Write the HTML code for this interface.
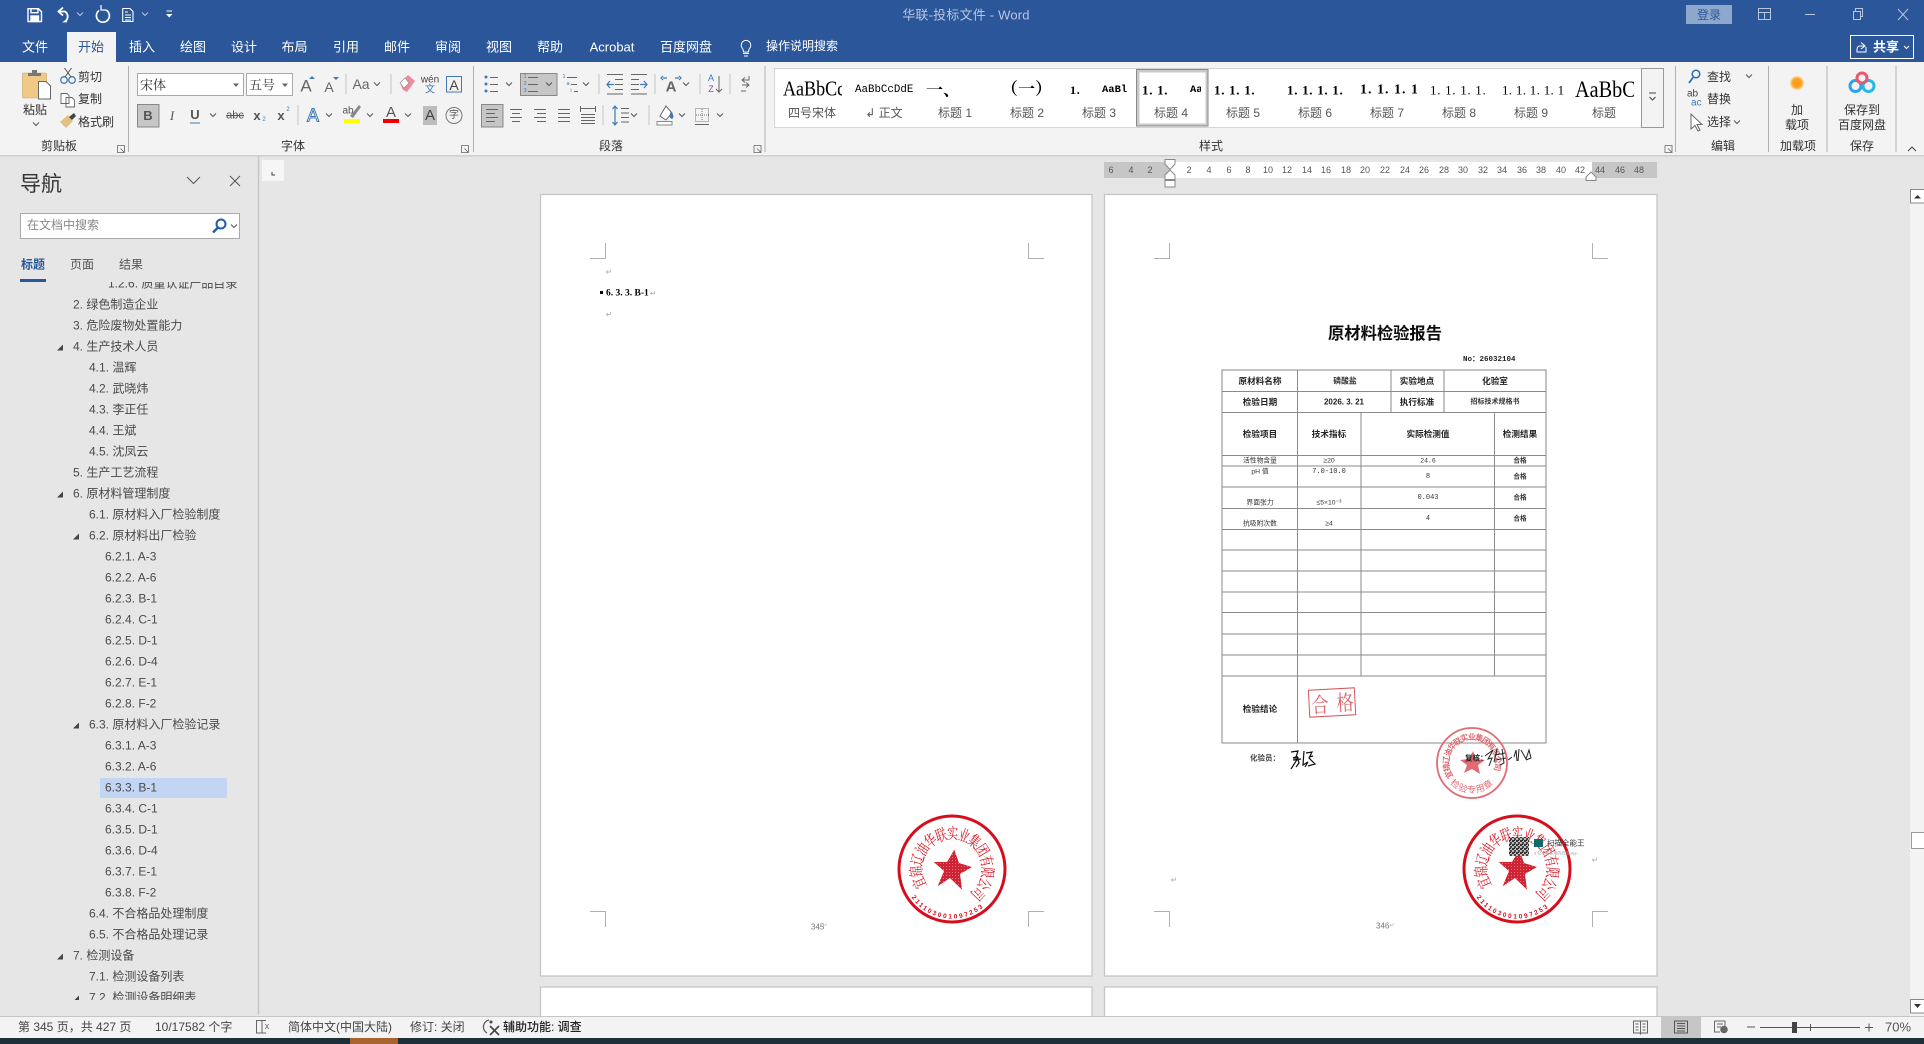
<!DOCTYPE html>
<html lang="zh-CN">
<head>
<meta charset="utf-8">
<title>华联-投标文件 - Word</title>
<style>
html,body{margin:0;padding:0;background:#e6e6e6;width:1924px;height:1044px;overflow:hidden}
svg.root{display:block;position:absolute;left:0;top:0}
text{font-family:"Liberation Sans","Noto Sans CJK SC",sans-serif;font-size:12px;fill:#444;dominant-baseline:central}
.m{text-anchor:middle}
.tab{font-size:13px;fill:#fff;text-anchor:middle}
.lab{font-size:12px;fill:#555;text-anchor:middle}
.sty{font-family:"Liberation Serif","Noto Serif CJK SC",serif;font-weight:bold;fill:#000;font-size:13px;letter-spacing:.7px}
.ser{font-family:"Liberation Serif","Noto Serif CJK SC",serif;fill:#000}
.tree text{font-size:12px;fill:#4a4a4a}
.rn{font-size:9px;fill:#555;text-anchor:middle}
.rep text{fill:#222;text-anchor:middle;font-weight:bold;font-size:8.6px}
.rep .s{font-size:6.8px;font-weight:normal;fill:#333}
.rep .sb{font-size:6.6px;font-weight:bold;fill:#333}
.rep .n{font-family:"Liberation Mono",monospace;font-size:7px;font-weight:normal;fill:#333}
.st{font-size:12px;fill:#444}
.i{fill:none;stroke:#666;stroke-width:1}
.b{fill:none;stroke:#3f78b5;stroke-width:1.2}
.f{fill:#666}
.sep{stroke:#c6c6c6;stroke-width:1}
.gs{stroke:#b0b0b0;stroke-width:1}
.pm{stroke:#b0b0b0;stroke-width:1;fill:none}
.pil{font-size:8px;fill:#aaa;text-anchor:middle}
.sc text{font-size:12.5px;fill:#d8101c;text-anchor:middle;font-family:"Noto Serif CJK SC",serif}
</style>
</head>
<body>
<svg class="root" width="1924" height="1044" viewBox="0 0 1924 1044" xmlns="http://www.w3.org/2000/svg">
<defs>
<path id="c" d="M-3 -1.5L0 1.5L3 -1.5" fill="none" stroke="#555" stroke-width="1"/>
<path id="cw" d="M-3 -1.5L0 1.5L3 -1.5" fill="none" stroke="#b8c6de" stroke-width="1"/>
<path id="lnch" d="M0 0H7V7H0V0M3 3L7 7M4 7H7V4" fill="none" stroke="#666" stroke-width=".8"/>
<path id="arc2" d="M-39 27 A47 47 0 0 0 33 34"/>
<path id="arc3" d="M-21 15 A26 26 0 1 1 21 15"/>
<path id="arc4" d="M-20 18 A27 27 0 0 0 20 18"/>
<filter id="bl" x="-5%" y="-5%" width="110%" height="110%"><feGaussianBlur stdDeviation=".28"/></filter>
<filter id="bl2" x="-5%" y="-5%" width="110%" height="110%"><feGaussianBlur stdDeviation=".2"/></filter>
<pattern id="qr" width="4" height="4" patternUnits="userSpaceOnUse"><rect width="4" height="4" fill="#bbb"/><rect width="2" height="2" fill="#333"/><rect x="2" y="2" width="2" height="2" fill="#444"/><rect x="2" width="1" height="1" fill="#222"/></pattern>
<pattern id="sn" width="3" height="3" patternUnits="userSpaceOnUse"><rect width="3" height="3" fill="#cf2233"/><rect width="1" height="1" fill="#e27a85"/></pattern>
<radialGradient id="og"><stop offset="0" stop-color="#ff9a10"/><stop offset=".6" stop-color="#fb9f1c"/><stop offset="1" stop-color="#fde0a8"/></radialGradient>
</defs>

<!-- main background -->
<rect width="1924" height="1044" fill="#e6e6e6"/>

<!-- pages -->
<rect x="540.500" y="194.500" width="551.500" height="781.500" fill="#fff" stroke="#c6c6c6" stroke-width="1.300"/>
<rect x="1104.500" y="194.500" width="552.500" height="781.500" fill="#fff" stroke="#c6c6c6" stroke-width="1.300"/>
<rect x="540.500" y="987" width="551.500" height="60" fill="#fff" stroke="#c6c6c6" stroke-width="1.300"/>
<rect x="1104.500" y="987" width="552.500" height="60" fill="#fff" stroke="#c6c6c6" stroke-width="1.300"/>

<!-- crop marks -->
<path class="pm" d="M590 258.500H605.500V243M1028.500 243V258.500H1044M590 911.500H605.500V927M1028.500 927V911.500H1044"/>
<path class="pm" d="M1154 258.500H1169.500V243M1592.500 243V258.500H1608M1154 911.500H1169.500V927M1592.500 927V911.500H1608"/>

<!-- page 1 content -->
<text class="pil" x="609" y="272">↵</text>
<rect x="600" y="291" width="3" height="3" fill="#000"/>
<text x="606" y="293.500" class="ser" style="font-size:9.500px;font-weight:bold">6. 3. 3. B-1</text>
<text class="pil" x="653" y="293.500">↵</text>
<text class="pil" x="609" y="314.500">↵</text>
<text x="811" y="927" style="font-size:8px;fill:#777">345</text>
<text class="pil" x="825" y="926" style="font-size:6px">↵</text>

<!-- stamp page 1 -->
<g transform="translate(952 869)" filter="url(#bl2)">
<circle r="53" fill="none" stroke="#d8101c" stroke-width="3"/>
<polygon points="2.300,-19.300 7,-6 20,-2 8,5 10,20.700 -2,9 -14.300,17.300 -8,2 -18.300,-7 -5,-7" fill="url(#sn)"/>
<g class="sc">
<text transform="rotate(-113) translate(0 -37) scale(.88 1.25)">宜</text><text transform="rotate(-94) translate(0 -37) scale(.88 1.25)">锦</text><text transform="rotate(-75) translate(0 -37) scale(.88 1.25)">辽</text><text transform="rotate(-56) translate(0 -37) scale(.88 1.25)">油</text><text transform="rotate(-37) translate(0 -37) scale(.88 1.25)">华</text><text transform="rotate(-18) translate(0 -37) scale(.88 1.25)">联</text><text transform="rotate(1) translate(0 -37) scale(.88 1.25)">实</text><text transform="rotate(20) translate(0 -37) scale(.88 1.25)">业</text><text transform="rotate(39) translate(0 -37) scale(.88 1.25)">集</text><text transform="rotate(58) translate(0 -37) scale(.88 1.25)">团</text><text transform="rotate(77) translate(0 -37) scale(.88 1.25)">有</text><text transform="rotate(96) translate(0 -37) scale(.88 1.25)">限</text><text transform="rotate(115) translate(0 -37) scale(.88 1.25)">公</text><text transform="rotate(134) translate(0 -37) scale(.88 1.25)">司</text>
</g>
<text style="font-size:6.500px;font-weight:bold;fill:#d8101c"><textPath href="#arc2" textLength="78">211103001097253</textPath></text>
</g>

<!-- page 2 report -->
<g filter="url(#bl)">
<text x="1385" y="334" class="m" style="font-size:16.300px;font-weight:bold;fill:#111">原材料检验报告</text>
<text x="1463" y="360" style="font-family:'Liberation Mono','Noto Sans CJK SC',monospace;font-size:7.500px;font-weight:bold;fill:#222">No：26032104</text>
<path stroke="#8a8a8a" stroke-width="1" fill="none" d="M1222 370H1546V743H1222ZM1222 391.500H1546M1222 412.500H1546M1222 455.500H1546M1222 466H1546M1222 487H1546M1222 508.500H1546M1222 529.500H1546M1222 550H1546M1222 571H1546M1222 592H1546M1222 612.500H1546M1222 634H1546M1222 655H1546M1222 676H1546M1297.500 370V743M1361 412.500V676M1494.500 412.500V676M1391 370V412.500M1444 370V412.500"/>
<g class="rep">
<text x="1260" y="381">原材料名称</text><text x="1345" y="381" class="sb" style="font-size:7.800px">磷酸盐</text><text x="1417" y="381">实验地点</text><text x="1495" y="381">化验室</text>
<text x="1260" y="402">检验日期</text><text x="1344" y="402" style="font-family:'Liberation Sans',sans-serif;font-size:8px">2026. 3. 21</text><text x="1417" y="402">执行标准</text><text x="1495" y="402" class="sb" style="font-size:7px">招标技术规格书</text>
<text x="1260" y="434">检验项目</text><text x="1329" y="434">技术指标</text><text x="1428" y="434">实际检测值</text><text x="1520" y="434">检测结果</text>
<text x="1260" y="461" class="s">活性物含量</text><text x="1329" y="461" class="s">≥20</text><text x="1428" y="461" class="n" style="font-size:6.500px">24.6</text><text x="1520" y="461" class="sb">合格</text>
<text x="1260" y="472" class="s">pH 值</text><text x="1329" y="472" class="n">7.0-10.0</text><text x="1428" y="477" class="n">8</text><text x="1520" y="477" class="sb">合格</text>
<text x="1260" y="503" class="s">界面张力</text><text x="1329" y="503" class="s">≤5×10⁻³</text><text x="1428" y="498" class="n">0.043</text><text x="1520" y="498" class="sb">合格</text>
<text x="1260" y="524" class="s">抗吸附次数</text><text x="1329" y="524" class="s">≥4</text><text x="1428" y="519" class="n">4</text><text x="1520" y="519" class="sb">合格</text>
<text x="1260" y="709">检验结论</text>
<text x="1265" y="758" style="font-size:7.500px;fill:#444">化验员：</text>
</g>
<!-- pass stamp -->
<g transform="rotate(-3 1332 702)">
<rect x="1309" y="689" width="46" height="27" fill="none" stroke="#d6565f" stroke-width="1"/>
<text transform="translate(1320 703) scale(1 1.25)" class="m" style="font-size:17px;fill:#d8606a;font-family:'Noto Serif CJK SC',serif">合</text>
<text transform="translate(1345 702) scale(1 1.25)" class="m" style="font-size:17px;fill:#d8606a;font-family:'Noto Serif CJK SC',serif">格</text>
</g>
<!-- signature 1 -->
<path d="M1291 752l7 -1l-2 6l-3 1l5 0l-7 11M1297 756l2 7l-3 4M1293 760l8 -1M1304 751l-1 14l5 -3l-3 5M1306 753l6 -1l-3 6l6 6l-7 2M1309 757l4 -1" fill="none" stroke="#111" stroke-width="1.200"/>
<!-- round inspection stamp -->
<g transform="translate(1472 763)">
<circle r="35" fill="none" stroke="#e26a72" stroke-width="1.800"/>
<polygon points="1,-12 4,-4 13,-3 6,2 8,11 0,6 -8,10 -5,2 -12,-3 -3,-4" fill="#e26a72"/>
<text style="font-size:8px;font-weight:bold;fill:#e26a72"><textPath href="#arc3" textLength="106">宜锦辽油华联实业集团有限公司</textPath></text>
<text style="font-size:9px;fill:#e26a72"><textPath href="#arc4" textLength="44">检验专用章</textPath></text>
</g>
<text x="1465" y="758" style="font-size:7.500px;font-weight:bold;fill:#222">复核：</text>
<path d="M1485 756l8 -6l-5 9l4 -1l-3 8M1497 749l-3 13M1495 755l10 -2M1496 760l10 -2M1502 749l2 14l-4 2M1508 760l4 -3M1514 757l2 -7l1 11M1519 749l-1 12M1521 750l5 9l3 -9l2 8l-5 2" fill="none" stroke="#222" stroke-width="1"/>
</g>

<!-- stamp page 2 -->
<g transform="translate(1517 869)" filter="url(#bl2)">
<circle r="53" fill="none" stroke="#d8101c" stroke-width="3"/>
<polygon points="2.300,-19.300 7,-6 20,-2 8,5 10,20.700 -2,9 -14.300,17.300 -8,2 -18.300,-7 -5,-7" fill="url(#sn)"/>
<g class="sc">
<text transform="rotate(-113) translate(0 -37) scale(.88 1.25)">宜</text><text transform="rotate(-94) translate(0 -37) scale(.88 1.25)">锦</text><text transform="rotate(-75) translate(0 -37) scale(.88 1.25)">辽</text><text transform="rotate(-56) translate(0 -37) scale(.88 1.25)">油</text><text transform="rotate(-37) translate(0 -37) scale(.88 1.25)">华</text><text transform="rotate(-18) translate(0 -37) scale(.88 1.25)">联</text><text transform="rotate(1) translate(0 -37) scale(.88 1.25)">实</text><text transform="rotate(20) translate(0 -37) scale(.88 1.25)">业</text><text transform="rotate(39) translate(0 -37) scale(.88 1.25)">集</text><text transform="rotate(58) translate(0 -37) scale(.88 1.25)">团</text><text transform="rotate(77) translate(0 -37) scale(.88 1.25)">有</text><text transform="rotate(96) translate(0 -37) scale(.88 1.25)">限</text><text transform="rotate(115) translate(0 -37) scale(.88 1.25)">公</text><text transform="rotate(134) translate(0 -37) scale(.88 1.25)">司</text>
</g>
<text style="font-size:6.500px;font-weight:bold;fill:#d8101c"><textPath href="#arc2" textLength="78">211103001097253</textPath></text>
</g>
<!-- scanner watermark -->
<rect x="1509" y="837" width="20" height="19" fill="url(#qr)"/>
<rect x="1534" y="839" width="9" height="8" fill="#0f6b6b"/>
<text x="1547" y="843" style="font-size:7.500px;fill:#333">扫描全能王</text>
<text x="1534" y="853" style="font-size:4px;fill:#999">3 亿人都在用的扫描 App</text>
<text class="pil" x="1595" y="860">↵</text>
<text class="pil" x="1174" y="880">↵</text>
<text x="1376" y="926" style="font-size:8px;fill:#777">346</text>
<text class="pil" x="1392" y="926" style="font-size:6px">↵</text>

<!-- corner tab stop -->
<rect x="262" y="160" width="22" height="21" fill="#f6f6f6"/>
<path d="M272 172V175H275" stroke="#444" fill="none"/>

<!-- ruler -->
<rect x="1104" y="162" width="553" height="16" fill="#c6c6c6"/>
<rect x="1170" y="162" width="422" height="16" fill="#fff"/>
<g>
<text class="rn" x="1111" y="170">6</text><text class="rn" x="1131" y="170">4</text><text class="rn" x="1150" y="170">2</text>
<text class="rn" x="1189" y="170">2</text><text class="rn" x="1209" y="170">4</text><text class="rn" x="1229" y="170">6</text><text class="rn" x="1248" y="170">8</text><text class="rn" x="1268" y="170">10</text><text class="rn" x="1287" y="170">12</text><text class="rn" x="1307" y="170">14</text><text class="rn" x="1326" y="170">16</text><text class="rn" x="1346" y="170">18</text><text class="rn" x="1365" y="170">20</text><text class="rn" x="1385" y="170">22</text><text class="rn" x="1405" y="170">24</text><text class="rn" x="1424" y="170">26</text><text class="rn" x="1444" y="170">28</text><text class="rn" x="1463" y="170">30</text><text class="rn" x="1483" y="170">32</text><text class="rn" x="1502" y="170">34</text><text class="rn" x="1522" y="170">36</text><text class="rn" x="1541" y="170">38</text><text class="rn" x="1561" y="170">40</text><text class="rn" x="1580" y="170">42</text><text class="rn" x="1600" y="170">44</text><text class="rn" x="1620" y="170">46</text><text class="rn" x="1639" y="170">48</text>
</g>
<path d="M1165 159.500H1175V164L1170 169.500L1165 164ZM1170 170L1175 175V179.500H1165V175Z" fill="#fff" stroke="#888"/>
<rect x="1165" y="180.500" width="10" height="6.500" fill="#fff" stroke="#888"/>
<path d="M1591 172L1596 177V180.500H1586V177Z" fill="#fff" stroke="#888"/>

<!-- vertical scrollbar -->
<rect x="1910" y="189" width="14" height="827" fill="#f3f3f3"/>
<rect x="1910.500" y="189.500" width="14" height="13.500" fill="#fff" stroke="#888"/>
<path d="M1914 198.500H1921L1917.500 195Z" fill="#333"/>
<rect x="1911.500" y="832.500" width="13" height="16" fill="#fff" stroke="#999"/>
<rect x="1910.500" y="999.500" width="14" height="13.500" fill="#fff" stroke="#888"/>
<path d="M1914 1004H1921L1917.500 1008Z" fill="#333"/>

<!-- nav pane -->
<rect x="0" y="156" width="258" height="860" fill="#e6e6e6"/>
<line x1="258.500" y1="156" x2="258.500" y2="1014" stroke="#c6c6c6" stroke-width="1.500"/>
<text x="20" y="184.500" style="font-size:21px;fill:#333">导航</text>
<path d="M187 177L193.500 183.500L200 177" fill="none" stroke="#555"/>
<path d="M230 176L240 186M240 176L230 186" fill="none" stroke="#555"/>
<rect x="20.500" y="213.500" width="219" height="25" fill="#fff" stroke="#aaa"/>
<text x="27" y="225" style="font-size:12px;fill:#888">在文档中搜索</text>
<circle cx="221" cy="224" r="4.500" fill="none" stroke="#1f5ea8" stroke-width="2"/>
<path d="M218 227.500L213 232.500" stroke="#1f5ea8" stroke-width="2.500"/>
<use href="#c" x="234" y="226"/>
<text x="21" y="264.500" style="font-size:12px;font-weight:bold;fill:#2b579a">标题</text>
<rect x="20" y="279" width="26" height="3" fill="#2b579a"/>
<text x="70" y="264.500" style="font-size:12px;fill:#555">页面</text>
<text x="119" y="264.500" style="font-size:12px;fill:#555">结果</text>
<rect x="100" y="778" width="127" height="20" fill="#c2d5f2"/>
<svg x="0" y="282" width="258" height="718" viewBox="0 282 258 718">
<g class="tree" transform="translate(0 .5)">
<text x="108" y="283">1.2.6. 质量认证产品目录</text>
<text x="73" y="304">2. 绿色制造企业</text>
<text x="73" y="325">3. 危险废物处置能力</text>
<path d="M57 350H63V344Z" fill="#444"/><text x="73" y="346">4. 生产技术人员</text>
<text x="89" y="367">4.1. 温辉</text>
<text x="89" y="388">4.2. 武晓炜</text>
<text x="89" y="409">4.3. 李正任</text>
<text x="89" y="430">4.4. 王斌</text>
<text x="89" y="451">4.5. 沈凤云</text>
<text x="73" y="472">5. 生产工艺流程</text>
<path d="M57 497H63V491Z" fill="#444"/><text x="73" y="493">6. 原材料管理制度</text>
<text x="89" y="514">6.1. 原材料入厂检验制度</text>
<path d="M73 539H79V533Z" fill="#444"/><text x="89" y="535">6.2. 原材料出厂检验</text>
<text x="105" y="556">6.2.1. A-3</text>
<text x="105" y="577">6.2.2. A-6</text>
<text x="105" y="598">6.2.3. B-1</text>
<text x="105" y="619">6.2.4. C-1</text>
<text x="105" y="640">6.2.5. D-1</text>
<text x="105" y="661">6.2.6. D-4</text>
<text x="105" y="682">6.2.7. E-1</text>
<text x="105" y="703">6.2.8. F-2</text>
<path d="M73 728H79V722Z" fill="#444"/><text x="89" y="724">6.3. 原材料入厂检验记录</text>
<text x="105" y="745">6.3.1. A-3</text>
<text x="105" y="766">6.3.2. A-6</text>
<text x="105" y="787">6.3.3. B-1</text>
<text x="105" y="808">6.3.4. C-1</text>
<text x="105" y="829">6.3.5. D-1</text>
<text x="105" y="850">6.3.6. D-4</text>
<text x="105" y="871">6.3.7. E-1</text>
<text x="105" y="892">6.3.8. F-2</text>
<text x="89" y="913">6.4. 不合格品处理制度</text>
<text x="89" y="934">6.5. 不合格品处理记录</text>
<path d="M57 959H63V953Z" fill="#444"/><text x="73" y="955">7. 检测设备</text>
<text x="89" y="976">7.1. 检测设备列表</text>
<path d="M73 1001H79V995Z" fill="#444"/><text x="89" y="997">7.2. 检测设备明细表</text>
</g>
</svg>

<!-- title bar / tabs -->
<rect width="1924" height="62" fill="#2b579a"/>
<g fill="none" stroke="#fff" stroke-width="1.400">
<path d="M28 8.700H38.500L41.500 11.700V21.500H28Z"/>
<rect x="31" y="8.700" width="7" height="4"/>
<rect x="31" y="16" width="7.500" height="5.500" fill="#fff"/>
<path d="M67 21.500H65A6 6 0 0 0 65 11.500H59" stroke-width="1.800"/>
<path d="M63 7.500L58.500 11.500L63 15.500" stroke-width="1.800"/>
<path d="M99 10.500A6.500 6.500 0 1 0 106 10" stroke-width="1.700"/>
<path d="M105 8V13H110" stroke-width="1.200" transform="translate(-4 -3)"/>
<path d="M122.700 8.500H130L133 11.500V21.500H122.700Z" stroke-width="1.100"/>
<path d="M125 12H128M125 15H131M125 17.500H131M125 20H131" stroke-width="1"/>
</g>
<use href="#cw" x="80" y="14"/><use href="#cw" x="145" y="14"/>
<path d="M166.500 11H172" stroke="#fff"/><path d="M166 14H172.500L169.250 17.500Z" fill="#fff"/>
<text x="966" y="15" class="m" style="font-size:13px;fill:#b8c6de;letter-spacing:.2px">华联-投标文件  -  Word</text>
<rect x="1686" y="5" width="46" height="19" fill="#8da7cd"/>
<text x="1709" y="15" class="m" style="font-size:12px;fill:#2b579a">登录</text>
<g fill="none" stroke="#b8c6de">
<path d="M1758.500 8.500H1770.500V19.500H1758.500ZM1758.500 12.500H1770.500M1764.500 12.500V19.500"/>
<path d="M1805 14.500H1815"/>
<path d="M1853.500 11.500H1860.500V19.500H1853.500ZM1855.500 11.500V8.500H1862.500V16.500H1860.500"/>
<path d="M1898 9L1908 20M1908 9L1898 20"/>
</g>
<rect x="67" y="32" width="49" height="30" fill="#f3f3f3"/>
<text class="tab" x="35" y="47">文件</text>
<text class="tab" x="91" y="47" style="fill:#2b579a">开始</text>
<text class="tab" x="142" y="47">插入</text>
<text class="tab" x="193" y="47">绘图</text>
<text class="tab" x="244" y="47">设计</text>
<text class="tab" x="294.500" y="47">布局</text>
<text class="tab" x="346" y="47">引用</text>
<text class="tab" x="397" y="47">邮件</text>
<text class="tab" x="448" y="47">审阅</text>
<text class="tab" x="499" y="47">视图</text>
<text class="tab" x="550" y="47">帮助</text>
<text class="tab" x="612" y="47">Acrobat</text>
<text class="tab" x="686" y="47">百度网盘</text>
<path d="M743 53.500H749M744 56H748M742.500 48.500A4.800 4.800 0 1 1 749.500 48.500C748.500 50 748.500 50.500 748.500 52H743.500C743.500 50.500 743.500 50 742.500 48.500Z" fill="none" stroke="#fff"/>
<text x="766" y="46" style="font-size:12px;fill:#fff">操作说明搜索</text>
<rect x="1850.500" y="35.500" width="63" height="23" fill="none" stroke="#fff"/>
<path d="M1861 42.500L1865 46L1861 49M1864 46H1860A3 3 0 0 0 1857 49V52H1866V47" fill="none" stroke="#fff" stroke-width="1"/>
<text x="1886" y="47" class="m" style="font-size:13px;font-weight:bold;fill:#fff">共享</text>
<path d="M1904 46L1906.500 48.500L1909 46" fill="none" stroke="#fff"/>

<!-- ribbon -->
<rect y="62" width="1924" height="93" fill="#f3f3f3"/>
<rect y="155" width="1924" height="1.500" fill="#cfcfcf"/>
<g class="gs"><line x1="128.500" y1="66" x2="128.500" y2="152"/><line x1="473.500" y1="66" x2="473.500" y2="152"/><line x1="765" y1="66" x2="765" y2="152"/><line x1="1675.500" y1="66" x2="1675.500" y2="152"/><line x1="1768.500" y1="66" x2="1768.500" y2="152"/><line x1="1827" y1="66" x2="1827" y2="152"/><line x1="1896" y1="66" x2="1896" y2="152"/></g>

<!-- clipboard -->
<rect x="22.500" y="73" width="24" height="25" rx="1" fill="#f0c987" stroke="#c9a566" stroke-width=".6"/>
<path d="M28 76H41V73H37V70H32V73H28Z" fill="#777"/>
<path d="M38.500 81.500H46L50.500 86V99H38.500Z" fill="#fff" stroke="#666"/>
<text x="35" y="110" class="m" style="font-size:12px;fill:#333">粘贴</text>
<use href="#c" x="36" y="124"/>
<circle cx="64" cy="80" r="3.300" fill="none" stroke="#3f78b5" stroke-width="1.300"/><circle cx="72" cy="80" r="3.300" fill="none" stroke="#3f78b5" stroke-width="1.300"/>
<path d="M65 77L71.500 68M71 77L64.500 68" stroke="#555" fill="none"/>
<text x="78" y="77" style="fill:#333">剪切</text>
<path d="M61 94.500H67L69 96.500V104.500H61ZM66 98.500H72L74.500 101V108H66Z" fill="#fff" stroke="#666" stroke-width=".9" transform="translate(0 -1)"/>
<text x="78" y="99" style="fill:#333">复制</text>
<path d="M60 122L68 115L73 121L66 128Z" fill="#e2c284"/><path d="M69 117L74 113L76 116L72 120Z" fill="#444"/>
<text x="78" y="122" style="fill:#333">格式刷</text>
<text x="59" y="146" class="lab" style="fill:#333">剪贴板</text>
<use href="#lnch" x="117.500" y="145.500"/>

<!-- font group -->
<rect x="137.500" y="73.500" width="106" height="22" fill="#fff" stroke="#aaa"/>
<text x="140" y="85" style="font-size:13px;fill:#333;font-family:'Liberation Serif','Noto Serif CJK SC',serif">宋体</text>
<path d="M233 83.500H239L236 87Z" fill="#666"/>
<rect x="246.500" y="73.500" width="46" height="22" fill="#fff" stroke="#aaa"/>
<text x="249" y="85" style="font-size:13px;fill:#333;font-family:'Liberation Serif','Noto Serif CJK SC',serif">五号</text>
<path d="M282 83.500H288L285 87Z" fill="#666"/>
<text x="306" y="86" class="m" style="font-size:17px;fill:#666">A</text><path d="M309 79H315L312 76Z" fill="#3f78b5"/>
<text x="329" y="87" class="m" style="font-size:14px;fill:#666">A</text><path d="M333 77H339L336 80Z" fill="#3f78b5"/>
<line class="sep" x1="346" y1="74" x2="346" y2="94"/>
<text x="361" y="84" class="m" style="font-size:14px;fill:#666">Aa</text><use href="#c" x="377" y="84"/>
<line class="sep" x1="391" y1="74" x2="391" y2="94"/>
<path d="M400 83L408 75L415 81L407 92L403 90Z" fill="#ef8a9c"/><path d="M400 83L405 78L409 83L404 88Z" fill="#fff" stroke="#888" stroke-width=".6"/>
<text x="430" y="80" class="m" style="font-size:10px;fill:#444">wén</text><text x="430" y="90" class="m" style="font-size:10px;fill:#3f78b5">文</text>
<rect x="446.500" y="76.500" width="15" height="15.500" fill="none" stroke="#3f78b5"/>
<text x="454" y="85" class="m" style="font-size:14px;fill:#444">A</text>

<rect x="137.500" y="104.500" width="21.500" height="22.500" fill="#c6c6c6" stroke="#888"/>
<text x="148" y="115.500" class="m" style="font-size:13px;font-weight:bold;fill:#555">B</text>
<text x="172" y="115.500" class="m" style="font-size:13px;font-style:italic;fill:#555;font-family:'Liberation Serif',serif">I</text>
<text x="195" y="114.500" class="m" style="font-size:13px;fill:#555;font-weight:bold">U</text><line x1="190" y1="123" x2="200" y2="123" stroke="#3f78b5"/>
<use href="#c" x="213" y="115"/>
<text x="235" y="115.500" class="m" style="font-size:11px;fill:#555;text-decoration:line-through">abc</text>
<text x="257" y="115.500" class="m" style="font-size:13px;fill:#555;font-weight:bold">x</text><text x="264" y="120" class="m" style="font-size:6px;fill:#3f78b5">2</text>
<text x="281" y="115.500" class="m" style="font-size:13px;fill:#555;font-weight:bold">x</text><text x="288" y="110" class="m" style="font-size:6px;fill:#3f78b5">2</text>
<line class="sep" x1="298" y1="105" x2="298" y2="125"/>
<text x="313" y="115.500" class="m" style="font-size:18px;fill:#fff;stroke:#3f78b5;stroke-width:1">A</text><use href="#c" x="329" y="115"/>
<text x="348" y="111" class="m" style="font-size:10px;fill:#555">ab</text><path d="M350 116L359 105L361 107L353 118Z" fill="#888"/><rect x="344" y="119" width="16" height="4" fill="#ff0"/>
<use href="#c" x="370" y="115"/>
<text x="391" y="112.500" class="m" style="font-size:15px;fill:#555">A</text><rect x="383" y="119" width="16" height="4" fill="#e00"/><use href="#c" x="408" y="115"/>
<rect x="423" y="106" width="14" height="19" fill="#bdbdbd"/><text x="430" y="115.500" class="m" style="font-size:15px;fill:#444">A</text>
<circle cx="454" cy="115.500" r="8" fill="none" stroke="#777"/><text x="454" y="115.500" class="m" style="font-size:10px;fill:#555">字</text>
<text x="293" y="146" class="lab" style="fill:#333">字体</text>
<use href="#lnch" x="461.500" y="145.500"/>

<!-- paragraph group -->
<g class="f"><circle cx="486" cy="77" r="1.500" fill="#3f78b5"/><circle cx="486" cy="84" r="1.500" fill="#3f78b5"/><circle cx="486" cy="91" r="1.500" fill="#3f78b5"/></g>
<path class="i" d="M490 77.500H498M490 84.500H498M490 91.500H498"/><use href="#c" x="509" y="84"/>
<rect x="520.500" y="73.500" width="36.500" height="22" fill="#c6c6c6" stroke="#888"/>
<text x="525" y="77" class="m" style="font-size:5.500px;fill:#3f78b5">1</text><text x="525" y="84" class="m" style="font-size:5.500px;fill:#3f78b5">2</text><text x="525" y="91" class="m" style="font-size:5.500px;fill:#3f78b5">3</text>
<path class="i" d="M528 77.500H538M528 84.500H538M528 91.500H538"/><use href="#c" x="549" y="84"/>
<text x="564" y="77" class="m" style="font-size:5.500px;fill:#3f78b5">1</text><text x="568" y="84" class="m" style="font-size:5.500px;fill:#3f78b5">a</text><text x="571" y="91" class="m" style="font-size:5.500px;fill:#3f78b5">i</text>
<path class="i" d="M567 77.500H577M571 84.500H577M574 91.500H578"/><use href="#c" x="586" y="84"/>
<line class="sep" x1="599" y1="74" x2="599" y2="94"/>
<path class="i" d="M607 74.500H623M615 79.500H623M615 84.500H623M615 89.500H623M607 94H623"/><path class="b" d="M614 84.500H607M610 81L607 84.500L610 88"/>
<path class="i" d="M631 74.500H647M631 79.500H639M631 84.500H639M631 89.500H639M631 94H647"/><path class="b" d="M640 84.500H647M644 81L647 84.500L644 88"/>
<line class="sep" x1="655" y1="74" x2="655" y2="94"/>
<text x="671" y="87" class="m" style="font-size:15px;fill:#666;font-weight:bold">A</text><path class="b" d="M663 78H667M663 76L661 78L663 80M679 78H675M679 76L681 78L679 80"/><use href="#c" x="686" y="84"/>
<line class="sep" x1="700" y1="74" x2="700" y2="94"/>
<text x="711" y="78" class="m" style="font-size:9px;fill:#3f78b5">A</text><text x="711" y="89" class="m" style="font-size:9px;fill:#8a4fb5">Z</text><path class="i" d="M719 76V92M716 89L719 92L722 89"/>
<line class="sep" x1="730" y1="74" x2="730" y2="94"/>
<path class="i" d="M749 76V80H742M745 77.500L742 80L745 82.500M742 85H749M746 82.500L749 85L746 87.500M741 91H746" />

<rect x="481.500" y="104.500" width="21.500" height="22.500" fill="#c6c6c6" stroke="#888"/>
<path class="i" d="M486 109.500H498M486 113.500H495M486 117.500H498M486 121.500H495"/>
<path class="i" d="M510 109.500H522M512 113.500H520M510 117.500H522M512 121.500H520"/>
<path class="i" d="M534 109.500H546M537 113.500H546M534 117.500H546M537 121.500H546"/>
<path class="i" d="M558 109.500H570M558 113.500H570M558 117.500H570M558 121.500H570"/>
<path class="i" d="M580.500 106V112M595.500 106V112M581 108.500H595M581 114.500H595M581 117.500H595M581 120.500H595M581 123.500H595"/>
<line class="sep" x1="603" y1="105" x2="603" y2="125"/>
<path class="i" d="M621 108.500H629M621 113H629M621 117.500H629M621 122H629"/><path class="b" d="M615 106V125M612.500 109L615 106L617.500 109M612.500 122L615 125L617.500 122"/><use href="#c" x="634" y="115"/>
<line class="sep" x1="649" y1="105" x2="649" y2="125"/>
<path d="M660 116L666 106L672 113L666 120Z" fill="#fff" stroke="#666"/><path d="M671 112C674 114 674 118 672 119C669 118 669 114 671 112Z" fill="#3f78b5"/><rect x="657" y="121.500" width="15" height="3.500" fill="#fff" stroke="#888"/><use href="#c" x="682" y="115"/>
<rect x="695.500" y="108.500" width="13" height="13" fill="none" stroke="#777" stroke-dasharray="1 1"/><path d="M695 124.500H709" stroke="#666"/><path d="M702 109V122M696 115H709" stroke="#777" stroke-dasharray="1 1"/><use href="#c" x="720" y="115"/>
<text x="611" y="146" class="lab" style="fill:#333">段落</text>
<use href="#lnch" x="754" y="145.500"/>

<!-- styles gallery -->
<rect x="774.500" y="68.500" width="889" height="59" fill="#fff" stroke="#d4d4d4"/>
<rect x="1138" y="71" width="69" height="54" fill="#fff" stroke="#c9c9c9" stroke-width="3"/>
<rect x="1136.500" y="69.500" width="71.500" height="56.500" fill="none" stroke="#8a8a8a"/>
<rect x="1641.500" y="68.500" width="22" height="59" fill="#f3f3f3" stroke="#999"/>
<path d="M1649 93H1656" stroke="#444"/><path d="M1649.500 97L1652.500 100L1655.500 97" fill="none" stroke="#444"/>
<svg x="783" y="76" width="59" height="28"><text transform="translate(0 13.500) scale(.86 1)" class="ser" style="font-size:21px">AaBbCc</text></svg>
<svg x="855" y="76" width="58" height="28"><text x="0" y="14" style="font-family:'Liberation Mono',monospace;font-size:10.800px;fill:#000">AaBbCcDdE</text></svg>
<text x="926" y="90" class="ser" style="font-size:17px;font-weight:bold">一、</text>
<text x="1001" y="89" class="ser" style="font-size:17px;font-weight:bold">（一）</text>
<text x="1070" y="90" class="sty" style="font-size:12px">1.</text>
<svg x="1102" y="76" width="27" height="28"><text x="0" y="14" style="font-family:'Liberation Mono',monospace;font-weight:bold;fill:#000;font-size:10.500px">AaBl</text></svg>
<text x="1142" y="90" class="sty">1. 1.</text>
<svg x="1190" y="76" width="11" height="28"><text x="0" y="14" style="font-family:'Liberation Mono',monospace;font-weight:bold;fill:#000;font-size:10.500px">Aa</text></svg>
<text x="1214" y="90" class="sty">1. 1. 1.</text>
<text x="1287" y="90" class="sty">1. 1. 1. 1.</text>
<svg x="1360" y="76" width="57" height="28"><text x="0" y="14" class="sty" style="font-size:14px;letter-spacing:1px">1. 1. 1. 1.</text></svg>
<text x="1430" y="90" class="sty" style="font-weight:normal">1. 1. 1. 1.</text>
<svg x="1502" y="76" width="61" height="28"><text x="0" y="14" class="sty" style="font-weight:normal;letter-spacing:.3px">1. 1. 1. 1. 1</text></svg>
<svg x="1575" y="76" width="59" height="28"><text transform="translate(0 13.500) scale(.88 1)" class="ser" style="font-size:23px">AaBbC(</text></svg>
<text x="812" y="113" class="lab">四号宋体</text>
<text x="884" y="113" class="lab">↲ 正文</text>
<text x="955" y="113" class="lab">标题 1</text>
<text x="1027" y="113" class="lab">标题 2</text>
<text x="1099" y="113" class="lab">标题 3</text>
<text x="1171" y="113" class="lab">标题 4</text>
<text x="1243" y="113" class="lab">标题 5</text>
<text x="1315" y="113" class="lab">标题 6</text>
<text x="1387" y="113" class="lab">标题 7</text>
<text x="1459" y="113" class="lab">标题 8</text>
<text x="1531" y="113" class="lab">标题 9</text>
<text x="1604" y="113" class="lab">标题</text>
<text x="1211" y="146" class="lab" style="fill:#333">样式</text>
<use href="#lnch" x="1665" y="145.500"/>

<!-- editing -->
<circle cx="1696" cy="74" r="3.800" fill="none" stroke="#2b6cb0" stroke-width="1.500"/><path d="M1693 77.500L1689 83" stroke="#2b6cb0" stroke-width="1.800"/>
<text x="1707" y="77" style="fill:#333">查找</text><use href="#c" x="1749" y="76"/>
<text x="1687" y="94" style="font-size:10px;fill:#444">ab</text><text x="1691" y="103" style="font-size:10px;fill:#3f78b5">ac</text>
<text x="1707" y="99" style="fill:#333">替换</text>
<path d="M1691 114V129L1695 125.500L1698 131L1700 130L1697 124.500H1702Z" fill="#fff" stroke="#666"/>
<text x="1707" y="122" style="fill:#333">选择</text><use href="#c" x="1737" y="122"/>
<text x="1723" y="146" class="lab" style="fill:#333">编辑</text>

<!-- add-ins -->
<circle cx="1797" cy="83" r="7" fill="url(#og)"/>
<text x="1797" y="110" class="lab" style="fill:#333">加</text>
<text x="1797" y="125" class="lab" style="fill:#333">载项</text>
<text x="1798" y="146" class="lab" style="fill:#333">加载项</text>

<!-- baidu save -->
<circle cx="1855.500" cy="86" r="5.500" fill="none" stroke="#2f9ff0" stroke-width="3"/>
<circle cx="1868.500" cy="86" r="5.500" fill="none" stroke="#25b8e8" stroke-width="3"/>
<circle cx="1862" cy="78" r="5" fill="none" stroke="#e9596d" stroke-width="3"/>
<text x="1862" y="110" class="lab" style="fill:#333">保存到</text>
<text x="1862" y="125" class="lab" style="fill:#333">百度网盘</text>
<text x="1862" y="146" class="lab" style="fill:#333">保存</text>
<path d="M1908 151L1912 147L1916 151" fill="none" stroke="#444"/>

<!-- status bar -->
<rect y="1016" width="1924" height="22" fill="#f3f3f3"/>
<rect y="1016" width="1924" height="1" fill="#c6c6c6"/>
<rect x="1661" y="1017" width="40" height="21" fill="#c6c6c6"/>
<text class="st" x="18" y="1027">第 345 页，共 427 页</text>
<text class="st" x="155" y="1027">10/17582 个字</text>
<path d="M256.500 1020.500H262V1033H256.500ZM262 1020.500H266M262 1033H266" fill="none" stroke="#666"/><text x="267" y="1026" class="m" style="font-size:9px;fill:#666">x</text>
<text class="st" x="288" y="1027">简体中文(中国大陆)</text>
<text class="st" x="410" y="1027">修订: 关闭</text>
<path d="M489 1020A7 7 0 0 0 487 1033" fill="none" stroke="#555" stroke-width="1.200"/><path d="M490 1026L499 1035M499 1026L490 1035" stroke="#444" stroke-width="1.600"/><circle cx="491" cy="1022" r="1.500" fill="#444"/>
<text class="st" x="503" y="1027" style="fill:#222;font-weight:500">辅助功能: 调查</text>
<path d="M1633.500 1021H1640L1640.500 1022L1641 1021H1647.500V1033H1641L1640.500 1034L1640 1033H1633.500ZM1640.500 1022V1033M1635.500 1024H1638.500M1635.500 1027H1638.500M1635.500 1030H1638.500M1642.500 1024H1645.500M1642.500 1027H1645.500M1642.500 1030H1645.500" fill="none" stroke="#666"/>
<path d="M1674.500 1021H1687.500V1033H1674.500ZM1677 1023.500H1685M1677 1026H1685M1677 1028.500H1685M1677 1031H1685" fill="none" stroke="#555"/>
<path d="M1714.500 1021H1725V1029M1714.500 1021V1032H1720M1717 1024H1723M1717 1027H1721" fill="none" stroke="#666"/><circle cx="1724" cy="1029.500" r="3.800" fill="#666"/>
<path d="M1747 1027H1755M1760 1027.500H1860M1865 1027.500H1873M1869 1023.500V1031.500" stroke="#555" fill="none"/>
<line x1="1810.500" y1="1024" x2="1810.500" y2="1031" stroke="#555"/>
<rect x="1792" y="1022" width="5" height="11" fill="#444"/>
<text x="1898" y="1027" class="m" style="font-size:13px;fill:#555">70%</text>

<!-- taskbar edge -->
<rect y="1038" width="1924" height="6" fill="#1f2f38"/>
<rect x="350" y="1038" width="48" height="6" fill="#a8642e"/>
</svg>
</body>
</html>
